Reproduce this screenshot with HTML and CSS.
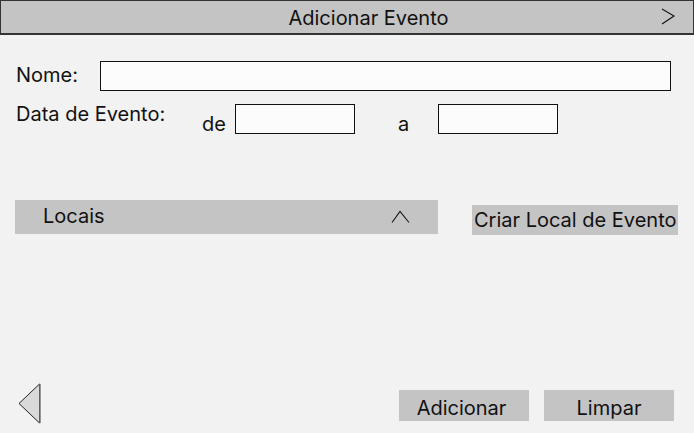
FILE: index.html
```html
<!DOCTYPE html>
<html lang="pt">
<head>
<meta charset="utf-8">
<title>Adicionar Evento</title>
<link rel="stylesheet" href="styles.css">
</head>
<body>
<div class="app">
  <header class="topbar">
    <span></span>
    <h1 class="title">Adicionar Evento</h1>
    <svg class="next" width="16" height="20" viewBox="0 0 16 20"><path d="M2 2 L14 9 L2 17" fill="none" stroke="#111" stroke-width="1.1"/></svg>
  </header>
  <main class="form">
    <div class="row row-name">
      <label class="label label-name">Nome:</label>
      <input class="field field-wide" type="text">
    </div>
    <div class="row row-date">
      <label class="label label-date">Data de Evento:</label>
      <span class="small-label de">de</span>
      <input class="field field-date" type="text">
      <span class="small-label a">a</span>
      <input class="field field-date" type="text">
    </div>
    <div class="row row-locais">
      <div class="locais">
        <span>Locais</span>
        <svg class="up" width="20" height="14" viewBox="0 0 20 14"><path d="M1 12.5 L9 1.5 L18 12.5" fill="none" stroke="#111" stroke-width="1.1"/></svg>
      </div>
      <button class="btn btn-criar">Criar Local de Evento</button>
    </div>
    <div class="spacer"></div>
    <div class="row row-bottom">
      <svg class="back" width="26" height="42" viewBox="0 0 26 42"><path d="M22.5 1 L2 20.5 L22.5 40 Z" fill="#d9d9d9" stroke="#222" stroke-width="1"/><path d="M23 1 L23 40" stroke="#777" stroke-width="1.5"/></svg>
      <div class="actions">
        <button class="btn btn-action btn-add">Adicionar</button>
        <button class="btn btn-action">Limpar</button>
      </div>
    </div>
  </main>
</div>
</body>
</html>
```
FILE: styles.css
```css
* { box-sizing: border-box; }
html, body { margin: 0; padding: 0; }
body {
  background: #f2f2f2;
  font-family: Inter, "Noto Sans", sans-serif;
  color: #111;
  width: 694px;
  height: 433px;
  overflow: hidden;
}
.app {
  display: flex;
  flex-direction: column;
  height: 433px;
}
.topbar {
  height: 35px;
  background: #c4c4c4;
  border: 1px solid #333;
  border-bottom: 2px solid #333;
  display: grid;
  grid-template-columns: 1fr auto 1fr;
  align-items: center;
}
.title {
  margin: 0 0 0 43px;
  font-size: 20px;
  font-weight: 400;
  line-height: 1;
  padding-top: 2px;
}
.next {
  justify-self: end;
  margin-right: 17px;
}
.form {
  flex: 1;
  display: flex;
  flex-direction: column;
  padding: 26px 0 8px 0;
}
.row { display: flex; }
.row-name {
  align-items: center;
  padding-left: 16px;
  padding-right: 23px;
}
.label {
  font-size: 20px;
  line-height: 24px;
}
.label-name { width: 84px; padding-bottom: 2px; }
.field {
  height: 30px;
  border: 1.5px solid #111;
  background: #fcfcfc;
  margin: 0;
  padding: 0;
  outline: none;
}
.field-wide { flex: 1; }
.row-date {
  margin-top: 13px;
  padding-left: 16px;
  align-items: flex-start;
}
.label-date { width: 186px; margin-top: -2px; }
.small-label {
  font-size: 20px;
  line-height: 24px;
  padding-top: 8px;
}
.de { width: 33px; }
.a { width: 83px; padding-left: 43px; }
.field-date { width: 120px; }
.row-locais {
  margin-top: 64px;
  padding-left: 15px;
  align-items: flex-start;
}
.locais {
  width: 423px;
  height: 34px;
  background: #c4c4c4;
  display: flex;
  align-items: center;
  justify-content: space-between;
  padding: 0 27px 0 28px;
  font-size: 20px;
  padding-bottom: 2px;
}
.up { margin-top: 2px; }
.btn {
  border: none;
  background: #c4c4c4;
  font-family: Inter, "Noto Sans", sans-serif;
  font-size: 20px;
  color: #111;
  padding: 0;
  margin: 0;
}
.btn-criar {
  margin-left: 34px;
  margin-top: 5px;
  width: 206px;
  height: 30px;
  white-space: nowrap;
  text-align: left;
  padding-left: 2px;
  overflow: hidden;
}
.spacer { flex: 1; }
.row-bottom {
  align-items: flex-start;
  justify-content: space-between;
  padding-left: 17px;
  padding-right: 20px;
}
.actions {
  display: flex;
  gap: 15px;
  margin-top: 7px;
}
.btn-action {
  width: 130px;
  height: 31px;
  padding-top: 4px;
}
.btn-add { padding-right: 5px; }
```
